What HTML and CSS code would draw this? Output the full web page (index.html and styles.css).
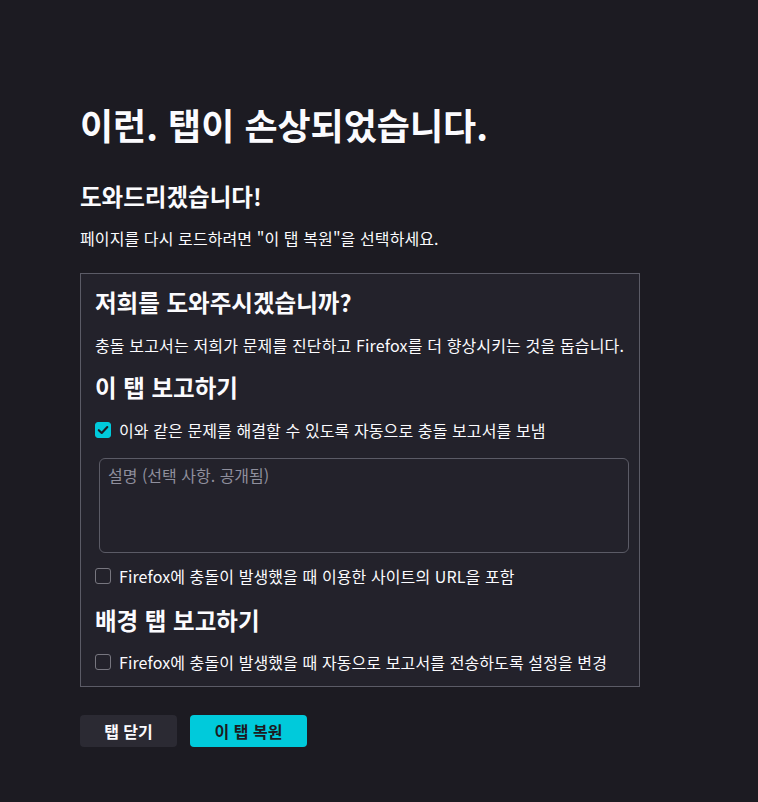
FILE: index.html
```html
<!DOCTYPE html>
<html lang="ko">
<head>
<meta charset="utf-8">
<title>탭 충돌</title>
<link rel="stylesheet" href="styles.css">
</head>
<body>
<main class="page">
  <h1 class="title">이런. 탭이 손상되었습니다.</h1>
  <h2 class="subtitle">도와드리겠습니다!</h2>
  <p class="lead">페이지를 다시 로드하려면 "이 탭 복원"을 선택하세요.</p>

  <section class="report">
    <h2 class="report-title">저희를 도와주시겠습니까?</h2>
    <p class="report-text">충돌 보고서는 저희가 문제를 진단하고 Firefox를 더 향상시키는 것을 돕습니다.</p>
    <h3 class="section-title">이 탭 보고하기</h3>
    <label class="check-row first">
      <span class="box checked">
        <svg viewBox="0 0 16 16" width="16" height="16"><path d="M3.8 8.2 L6.7 11 L12.3 5" fill="none" stroke="#1c1b22" stroke-width="2.1" stroke-linecap="round" stroke-linejoin="round"/></svg>
      </span>
      <span class="check-label">이와 같은 문제를 해결할 수 있도록 자동으로 충돌 보고서를 보냄</span>
    </label>
    <div class="textarea"><span class="placeholder">설명 (선택 사항. 공개됨)</span></div>
    <label class="check-row url">
      <span class="box"></span>
      <span class="check-label">Firefox에 충돌이 발생했을 때 이용한 사이트의 URL을 포함</span>
    </label>
    <h3 class="section-title bg">배경 탭 보고하기</h3>
    <label class="check-row last">
      <span class="box"></span>
      <span class="check-label">Firefox에 충돌이 발생했을 때 자동으로 보고서를 전송하도록 설정을 변경</span>
    </label>
  </section>

  <div class="actions">
    <button class="btn secondary">탭 닫기</button>
    <button class="btn primary">이 탭 복원</button>
  </div>
</main>
</body>
</html>
```
FILE: styles.css
```css
html, body {
  margin: 0;
  padding: 0;
  background: #1c1b22;
  color: #fbfbfe;
  font-family: "Noto Sans CJK KR", "Noto Sans", sans-serif;
}
.page {
  width: 560px;
  margin-left: 80px;
  padding-top: 98px;
}
.title {
  margin: 0;
  font-size: 36px;
  line-height: 52px;
  font-weight: 700;
}
.subtitle {
  margin: 30px 0 0;
  font-size: 23.5px;
  line-height: 32px;
  font-weight: 700;
}
.lead {
  margin: 14px 0 0;
  font-size: 16px;
  line-height: 24px;
  letter-spacing: 0.1px;
}
.report {
  margin-top: 23px;
  border: 1px solid #5b5b66;
  background: #23222b;
  padding: 11px 14px 12px;
}
.report-title {
  margin: 0;
  font-size: 23.5px;
  line-height: 34px;
  font-weight: 700;
}
.report-text {
  margin: 14px 0 0;
  font-size: 16px;
  line-height: 24px;
  letter-spacing: 0.15px;
}
.section-title {
  margin: 14px 0 0;
  font-size: 23.5px;
  line-height: 32px;
  font-weight: 700;
}
.section-title.bg {
  margin-top: 16px;
}
.check-row {
  display: flex;
  align-items: center;
  gap: 8px;
  margin-top: 15px;
  font-size: 16px;
  line-height: 24px;
  letter-spacing: 0.1px;
}
.check-row.url {
  margin-top: 11px;
}
.check-row.last {
  margin-top: 14px;
}
.box {
  width: 16px;
  height: 16px;
  box-sizing: border-box;
  border: 1px solid #77767f;
  border-radius: 3px;
  flex: none;
  display: flex;
}
.box.checked {
  background: #00cadb;
  border-color: #00cadb;
}
.box.checked svg {
  margin: -1px;
}
.textarea {
  margin: 16px 0 0 4px;
  width: 530px;
  height: 95px;
  box-sizing: border-box;
  border: 1px solid #5b5b66;
  border-radius: 6px;
  padding: 4px 8px;
  font-size: 16px;
  line-height: 24px;
}
.placeholder {
  color: #8f8f9d;
}
.actions {
  display: flex;
  gap: 13px;
  margin-top: 28px;
}
.btn {
  height: 32px;
  border: none;
  border-radius: 4px;
  font-family: inherit;
  font-size: 16px;
  font-weight: 700;
  padding: 0;
  cursor: pointer;
}
.btn.secondary {
  width: 97px;
  background: #2b2a33;
  color: #fbfbfe;
}
.btn.primary {
  width: 117px;
  background: #00cadb;
  color: #1c1b22;
}
```
